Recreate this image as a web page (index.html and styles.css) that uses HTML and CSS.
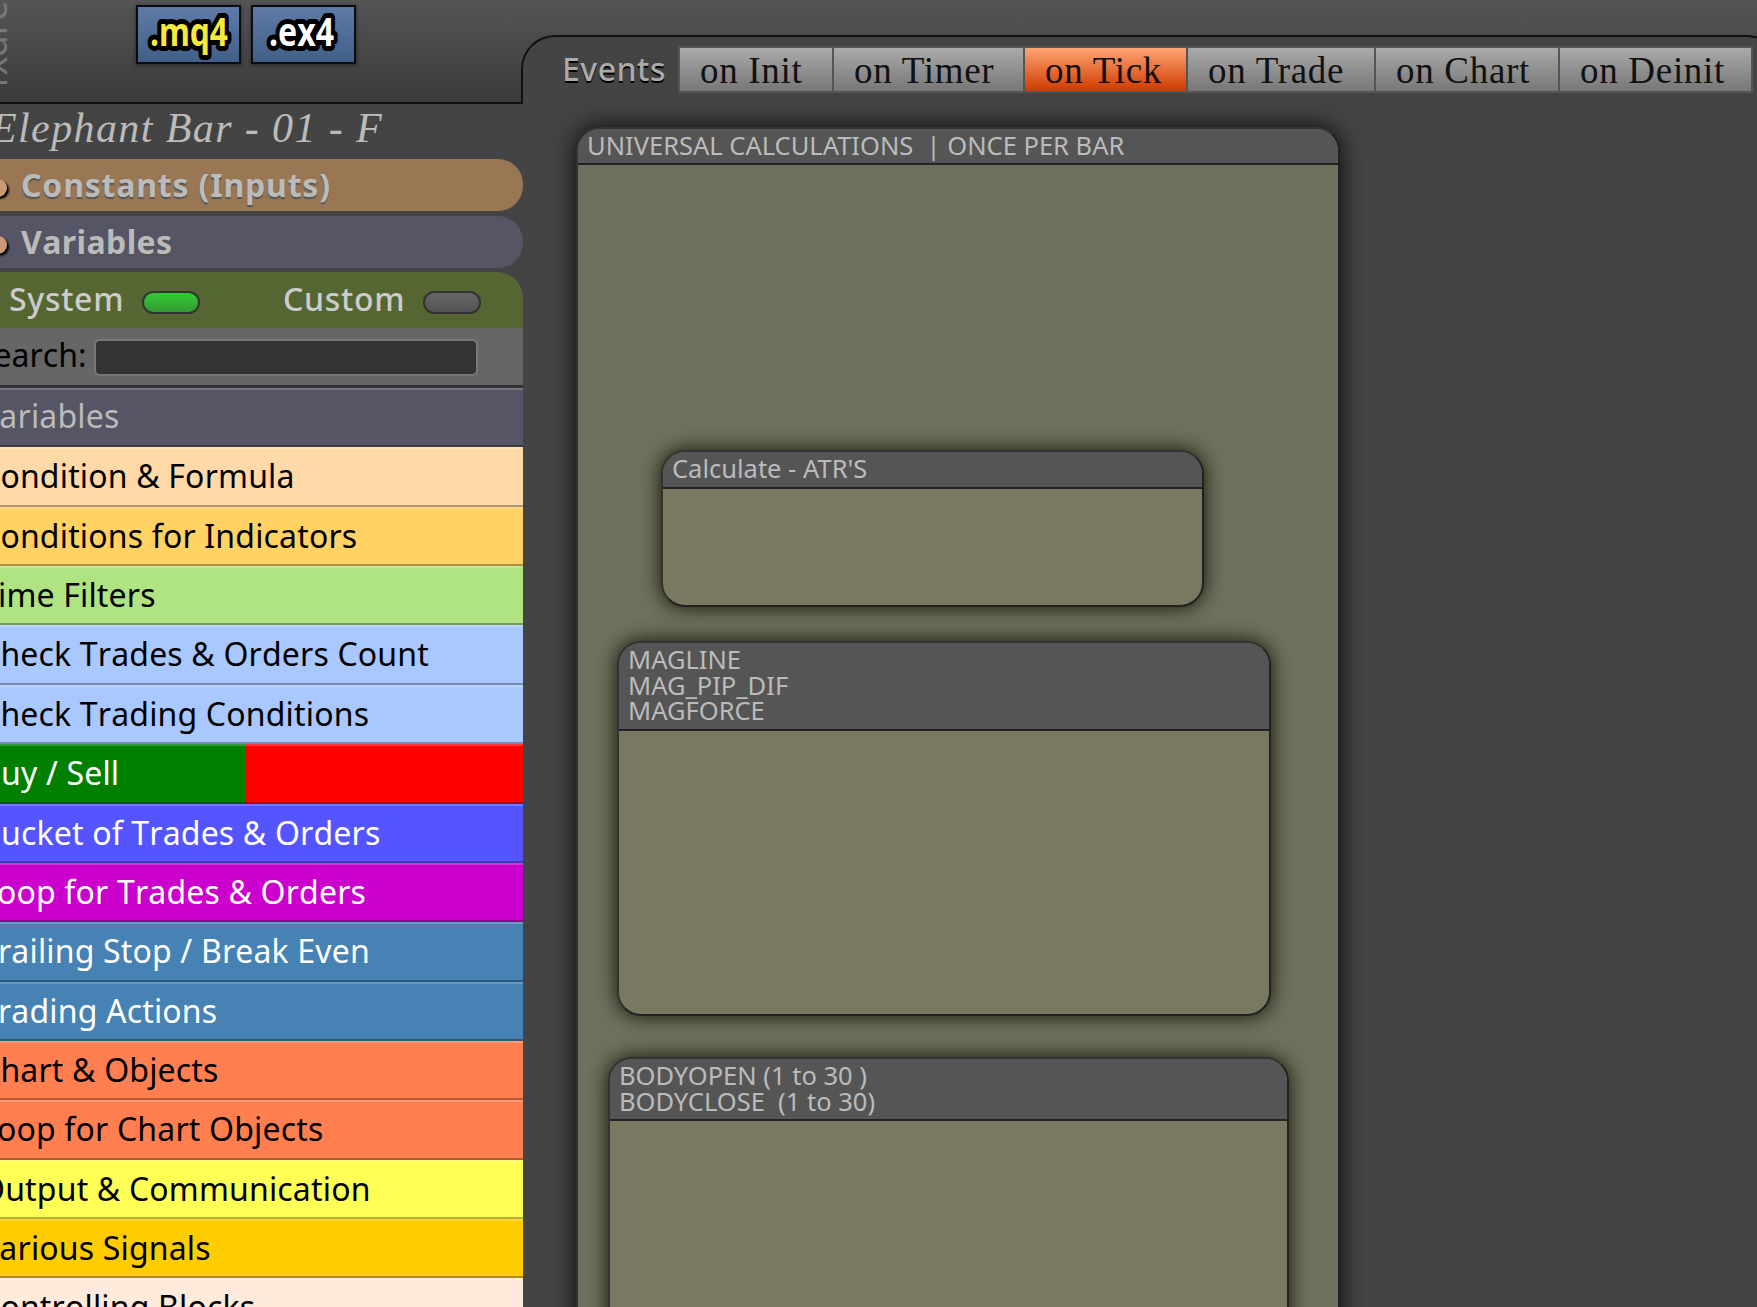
FILE: index.html
```
<!DOCTYPE html>
<html lang="en">
  <head>
    <meta charset="UTF-8" />
    <title>Elephant Bar - 01 - F</title>
    <link rel="stylesheet" href="styles.css">
  </head>
  <body>
    <div class="app">
      <aside class="sidebar">
        <div class="toolbar">
          <div class="brand">fxdreema</div>
          <div class="exports">
            <svg class="export" width="105" height="59" viewBox="0 0 101 55">
              <text class="export-text mq4" x="12" y="39" textLength="78" lengthAdjust="spacingAndGlyphs">.mq4</text>
            </svg>
            <svg class="export" width="105" height="59" viewBox="0 0 101 55">
              <text class="export-text ex4" x="16" y="39" textLength="65" lengthAdjust="spacingAndGlyphs">.ex4</text>
            </svg>
          </div>
        </div>

        <h1 class="project-name">Elephant Bar - 01 - F</h1>

        <div class="section constants"><span class="dot"></span>Constants (Inputs)</div>
        <div class="section variables"><span class="dot"></span>Variables</div>

        <div class="switches">
          <span class="switch-label system">System</span>
          <span class="toggle on"></span>
          <span class="switch-label custom">Custom</span>
          <span class="toggle"></span>
        </div>

        <div class="search">
          <label for="search">Search:</label>
          <input type="text" id="search" />
        </div>

        <ul class="categories">
          <li class="cat-variables">Variables</li>
          <li class="cat-condition">Condition &amp; Formula</li>
          <li class="cat-indicators">Conditions for Indicators</li>
          <li class="cat-time">Time Filters</li>
          <li class="cat-check">Check Trades &amp; Orders Count</li>
          <li class="cat-check">Check Trading Conditions</li>
          <li class="cat-buysell">Buy / Sell</li>
          <li class="cat-bucket">Bucket of Trades &amp; Orders</li>
          <li class="cat-loop">Loop for Trades &amp; Orders</li>
          <li class="cat-trading">Trailing Stop / Break Even</li>
          <li class="cat-trading">Trading Actions</li>
          <li class="cat-chart">Chart &amp; Objects</li>
          <li class="cat-chart">Loop for Chart Objects</li>
          <li class="cat-output">Output &amp; Communication</li>
          <li class="cat-signals">Various Signals</li>
          <li class="cat-controlling">Controlling Blocks</li>
        </ul>
      </aside>

      <main class="workspace">
        <nav class="events">
          <span class="events-label">Events</span>
          <div class="tabs">
            <a class="tab">on Init</a>
            <a class="tab">on Timer</a>
            <a class="tab active">on Tick</a>
            <a class="tab">on Trade</a>
            <a class="tab">on Chart</a>
            <a class="tab">on Deinit</a>
          </div>
        </nav>

        <div class="group universal"><div class="group-title">UNIVERSAL CALCULATIONS  | ONCE PER BAR</div></div>
        <div class="group inner atr"><div class="group-title">Calculate - ATR'S</div></div>
        <div class="group inner mag"><div class="group-title">MAGLINE
MAG_PIP_DIF
MAGFORCE</div></div>
        <div class="group inner bodies"><div class="group-title">BODYOPEN (1 to 30 )
BODYCLOSE  (1 to 30)</div></div>
      </main>
    </div>
  </body>
</html>
```
FILE: styles.css
```
* {
  box-sizing: border-box;
}
body {
  margin: 0;
  overflow: hidden;
  font-family: "Noto Sans", sans-serif;
  font-size: 32px;
  font-kerning: none;
  color: #000;
  background: #444;
}
.app {
  position: relative;
  display: flex;
  width: 1757px;
  height: 1307px;
  overflow: hidden;
  background: linear-gradient(#555, #3a3a3a 102px, #444 102px);
}

/* sidebar, scrolled a little to the left */
.sidebar {
  flex: none;
  width: 552px;
  margin-left: -31px;
}
.toolbar {
  display: flex;
  height: 104px;
  padding: 5px 0 0 8px;
  border-bottom: 2px solid #111;
}
.brand {
  width: 34px;
  height: 83px;
  margin-right: 125px;
  font-size: 36px;
  line-height: 34px;
  color: #777;
  writing-mode: vertical-rl;
  transform: rotate(180deg);
  white-space: nowrap;
}
.exports {
  display: flex;
  gap: 10px;
}
.export {
  border: 2px solid #0a0c10;
  background: linear-gradient(#607aa8, #406088);
  box-shadow: 0 1px 4px rgba(0, 0, 0, 0.5);
}
.export-text {
  font-weight: bold;
  font-size: 39px;
  stroke: #000;
  stroke-width: 10px;
  stroke-linejoin: round;
  paint-order: stroke;
}
.mq4 {
  fill: #f7e83c;
}
.ex4 {
  fill: #fff;
}
.project-name {
  height: 55px;
  margin: 0;
  padding-left: 22px;
  font: italic 42px/49px "Liberation Serif", serif;
  letter-spacing: 1.4px;
  color: #bbb;
  white-space: nowrap;
}
.section {
  display: flex;
  align-items: center;
  width: 554px;
  height: 52px;
  padding: 0 0 2px 20px;
  border-radius: 0 25px 25px 0;
  font-weight: bold;
  letter-spacing: 0.8px;
  color: #bbb;
  text-shadow: 0 2px 1px #555;
}
.constants {
  margin-bottom: 5px;
  background: #975;
}
.variables {
  margin-bottom: 4px;
  letter-spacing: 0.4px;
  background: #556;
}
.dot {
  width: 18px;
  height: 18px;
  margin: 7px 14px 0 0;
  border-radius: 50%;
  background: #c97;
  box-shadow: 2px 2px 2px #000;
}
.switches {
  display: flex;
  align-items: center;
  width: 554px;
  height: 56px;
  padding-left: 40px;
  border-radius: 0 26px 0 0;
  background: #563;
}
.switch-label {
  padding-bottom: 3px;
  font-weight: 500;
  letter-spacing: 0.7px;
  color: #ccc;
}
.system {
  width: 133px;
}
.custom {
  width: 140px;
  margin-left: 83px;
}
.toggle {
  width: 58px;
  height: 23px;
  margin-top: 5px;
  border: 2px solid #333;
  border-radius: 12px;
  background: linear-gradient(#666, #555);
}
.toggle.on {
  background: linear-gradient(#3c3, #393);
}
.search {
  display: flex;
  align-items: center;
  width: 554px;
  height: 60px;
  padding-left: 7px;
  border-bottom: 3px solid #333;
  background: #666;
}
.search label {
  width: 118px;
  padding-bottom: 4px;
}
.search input {
  width: 384px;
  height: 37px;
  margin-top: 1px;
  border: 2px solid #777;
  border-radius: 6px;
  background: #333;
}
.categories {
  width: 554px;
  margin: 0;
  padding: 0;
  list-style: none;
}
.categories li {
  height: 59.36px;
  padding-left: 11px;
  border-top: 2px solid rgba(255, 255, 255, 0.2);
  border-bottom: 2px solid rgba(0, 0, 0, 0.3);
  background-origin: border-box;
  line-height: 53px;
  letter-spacing: 0.17px;
  white-space: nowrap;
}
.categories .cat-variables {
  line-height: 52px;
  color: #bbb;
  background-color: #556;
}
.cat-condition {
  background-color: #ffdaa8;
}
.cat-indicators {
  background-color: #ffd263;
}
.cat-time {
  background-color: #b0e382;
}
.cat-check {
  background-color: #a9c8ff;
}
.cat-buysell,
.cat-bucket,
.cat-loop,
.cat-trading {
  color: #fff;
}
.cat-buysell {
  background-image: linear-gradient(90deg, green 50%, red 50%);
}
.cat-bucket {
  background-color: #55f;
}
.cat-loop {
  background-color: #c0c;
}
.cat-trading {
  background-color: steelblue;
}
.cat-chart {
  background-color: #ff7f50;
}
.cat-output {
  background-color: #ff5;
}
.cat-signals {
  background-color: #fc0;
}
.cat-controlling {
  background-color: #ffeadb;
}

/* workspace */
.workspace {
  flex: none;
  width: 1260px;
  height: 1307px;
}
.events {
  display: flex;
  height: 69px;
  margin-top: 35px;
  padding: 9px 0 0 39px;
  border: 2px solid #111;
  border-bottom: none;
  border-radius: 34px 34px 0 0;
  background: #444;
}
.events-label {
  width: 116px;
  font-weight: 500;
  line-height: 46px;
  letter-spacing: 0.5px;
  color: #aaa;
  text-shadow: 0 2px 0 #000;
}
.tabs {
  display: grid;
  grid-template-columns: 152px 189px 161px 186px 182px 191px;
  gap: 2px;
  height: 47px;
  border: 2px solid #555;
  background: #555;
}
.tab {
  height: 43px;
  padding-left: 20px;
  font: 37px/45px "Liberation Serif", serif;
  letter-spacing: 0.7px;
  color: #111;
  background: linear-gradient(#aaa, #777);
}
.tab.active {
  background: linear-gradient(#ffa573, #cf3a00);
}

/* block groups dragged onto the canvas */
.group {
  position: absolute;
  border: 2px solid #222;
  border-top-color: #333;
  border-left-color: #333;
  border-radius: 24px;
  background: #797962;
  box-shadow: 0 0 24px rgba(0, 0, 0, 0.9);
  overflow: hidden;
}
.inner {
  box-shadow: 0 0 20px #110;
}
.group-title {
  padding: 4px 9px;
  border-bottom: 2px solid #222;
  font-size: 25.5px;
  font-kerning: auto;
  line-height: 25.5px;
  color: #bbb;
  background: #555;
  white-space: pre;
}
.inner .group-title {
  padding-bottom: 5px;
}
.universal {
  left: 576px;
  top: 127px;
  width: 764px;
  height: 1300px;
  background: #6f705d;
}
.atr {
  left: 661px;
  top: 450px;
  width: 543px;
  height: 157px;
}
.mag {
  left: 617px;
  top: 641px;
  width: 654px;
  height: 375px;
}
.bodies {
  left: 608px;
  top: 1057px;
  width: 681px;
  height: 400px;
}
```
